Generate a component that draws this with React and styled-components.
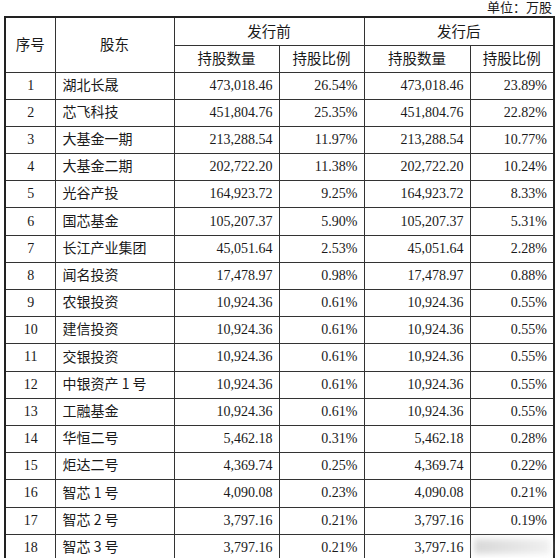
import styled, { createGlobalStyle } from "styled-components";

const GlobalStyle = createGlobalStyle`
  html, body {
    margin: 0;
    padding: 0;
    background: #fff;
  }
  body {
    font-family: "Liberation Serif", "Noto Sans CJK SC", serif;
    color: #1a1a1a;
  }
`;

const rows = [
  ["1", "湖北长晟", "473,018.46", "26.54%", "473,018.46", "23.89%"],
  ["2", "芯飞科技", "451,804.76", "25.35%", "451,804.76", "22.82%"],
  ["3", "大基金一期", "213,288.54", "11.97%", "213,288.54", "10.77%"],
  ["4", "大基金二期", "202,722.20", "11.38%", "202,722.20", "10.24%"],
  ["5", "光谷产投", "164,923.72", "9.25%", "164,923.72", "8.33%"],
  ["6", "国芯基金", "105,207.37", "5.90%", "105,207.37", "5.31%"],
  ["7", "长江产业集团", "45,051.64", "2.53%", "45,051.64", "2.28%"],
  ["8", "闻名投资", "17,478.97", "0.98%", "17,478.97", "0.88%"],
  ["9", "农银投资", "10,924.36", "0.61%", "10,924.36", "0.55%"],
  ["10", "建信投资", "10,924.36", "0.61%", "10,924.36", "0.55%"],
  ["11", "交银投资", "10,924.36", "0.61%", "10,924.36", "0.55%"],
  ["12", "中银资产 1 号", "10,924.36", "0.61%", "10,924.36", "0.55%"],
  ["13", "工融基金", "10,924.36", "0.61%", "10,924.36", "0.55%"],
  ["14", "华恒二号", "5,462.18", "0.31%", "5,462.18", "0.28%"],
  ["15", "炬达二号", "4,369.74", "0.25%", "4,369.74", "0.22%"],
  ["16", "智芯 1 号", "4,090.08", "0.23%", "4,090.08", "0.21%"],
  ["17", "智芯 2 号", "3,797.16", "0.21%", "3,797.16", "0.19%"],
  ["18", "智芯 3 号", "3,797.16", "0.21%", "3,797.16", "0.18%"],
];

const App = () => {
  return (
    <Page>
      <GlobalStyle />
      <Unit>单位：万股</Unit>
      <Table>
        <colgroup>
          <col style={{ width: 50 }} />
          <col style={{ width: 119 }} />
          <col style={{ width: 105 }} />
          <col style={{ width: 85 }} />
          <col style={{ width: 106 }} />
          <col style={{ width: 84 }} />
        </colgroup>
        <thead>
          <HeadRow $h={28}>
            <Th rowSpan={2}>序号</Th>
            <Th rowSpan={2}>股东</Th>
            <Th colSpan={2}>发行前</Th>
            <Th colSpan={2}>发行后</Th>
          </HeadRow>
          <HeadRow $h={27}>
            <Th>持股数量</Th>
            <Th>持股比例</Th>
            <Th>持股数量</Th>
            <Th>持股比例</Th>
          </HeadRow>
        </thead>
        <tbody>
          {rows.map((r) => (
            <Row key={r[0]}>
              <Cell $align="center">{r[0]}</Cell>
              <NameCell>{r[1]}</NameCell>
              <Cell>{r[2]}</Cell>
              <Cell>{r[3]}</Cell>
              <Cell>{r[4]}</Cell>
              <Cell>{r[5]}</Cell>
            </Row>
          ))}
        </tbody>
      </Table>
      <Watermark>
        <span />
      </Watermark>
    </Page>
  );
};

const Page = styled.div`
  position: relative;
  width: 558px;
  height: 558px;
  overflow: hidden;
  padding: 0 4px 0 4px;
  box-sizing: border-box;
`;

const Unit = styled.div`
  height: 16px;
  padding: 1px 2px 0 0;
  box-sizing: border-box;
  line-height: 14px;
  text-align: right;
  font-size: 13px;
`;

const Table = styled.table`
  border-collapse: collapse;
  table-layout: fixed;
  width: 550px;
  border: 2px solid #222;
  font-size: 14px;
`;

const HeadRow = styled.tr`
  height: ${(p) => p.$h}px;
`;

const Th = styled.th`
  font-weight: normal;
  text-align: center;
  border: 1px solid #333;
  padding: 0 0 2px;
  font-size: 14.5px;
  font-family: "Noto Sans CJK SC", sans-serif;
  line-height: 1.2;
`;

const Row = styled.tr`
  height: 27.2px;
`;

const Cell = styled.td`
  border: 1px solid #333;
  padding: 0 6px 0 7px;
  text-align: ${(p) => p.$align || "right"};
  white-space: nowrap;
`;

const NameCell = styled(Cell)`
  text-align: left;
  padding-bottom: 3px;
  font-family: "Noto Sans CJK SC", "Liberation Serif", sans-serif;
  line-height: 1.2;
`;

const Watermark = styled.div`
  position: absolute;
  left: 471px;
  top: 535px;
  width: 82px;
  height: 23px;
  background: #fff;
  span {
    display: block;
    margin: 4px 3px;
    height: 15px;
    background: linear-gradient(90deg, #d8d8d8, #e6e6e6 60%, #f0f0f0);
    filter: blur(3px);
  }
`;

export default App;
